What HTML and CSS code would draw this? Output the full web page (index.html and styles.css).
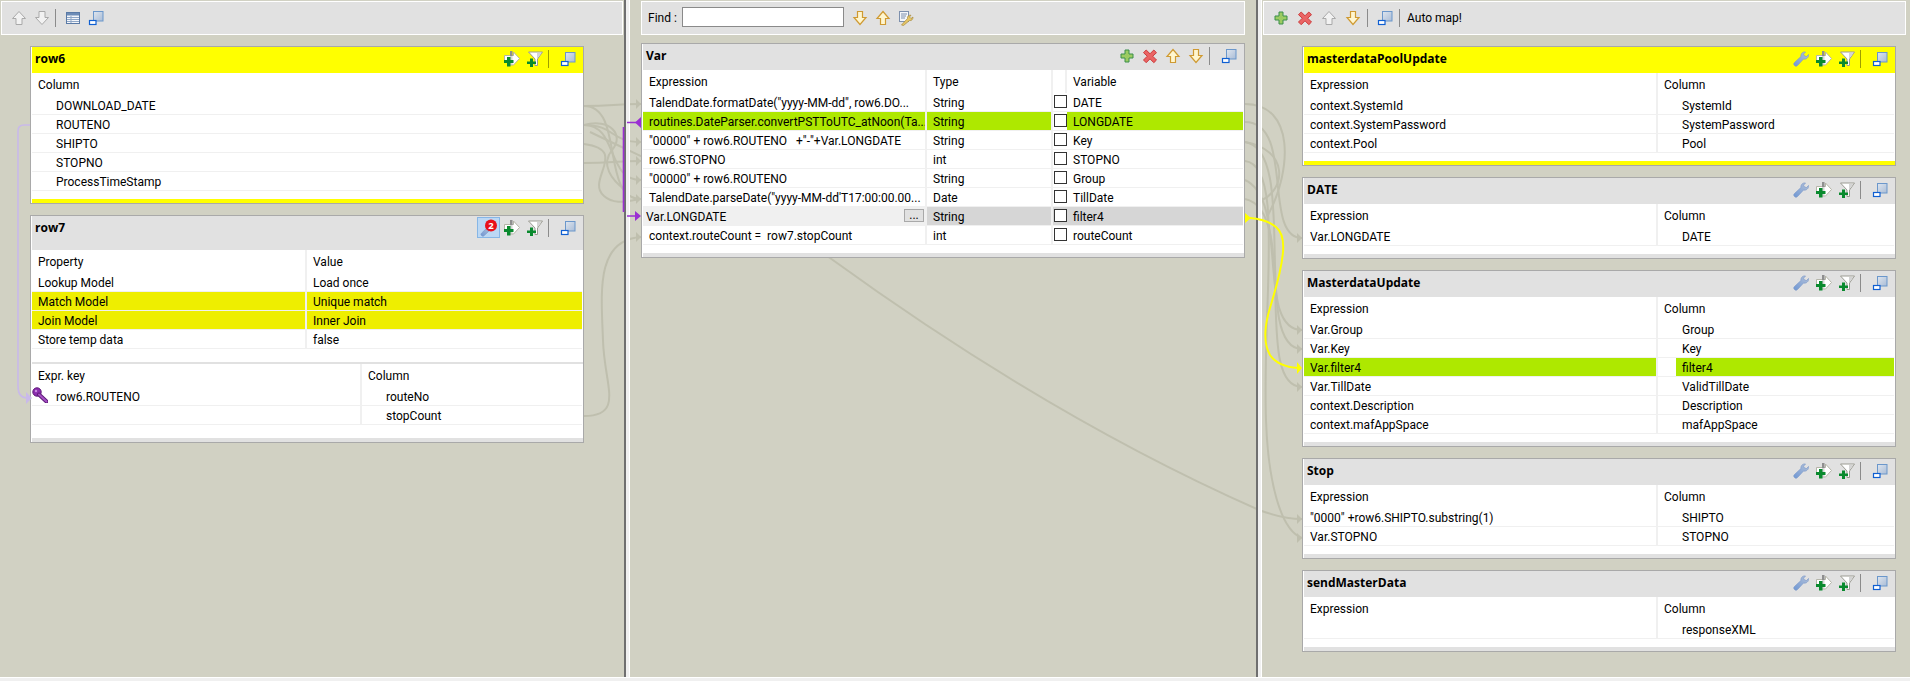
FILE: index.html
```html
<!DOCTYPE html>
<html lang="en">
<head>
<meta charset="utf-8">
<title>tMap editor</title>
<link rel="stylesheet" href="styles.css">
</head>
<body>
<svg class="sprite" width="0" height="0" aria-hidden="true">
  <defs>
    <linearGradient id="g-win" x1="0" y1="0" x2="1" y2="1"><stop offset="0" stop-color="#dfe6ef"/><stop offset="1" stop-color="#a9bcd6"/></linearGradient>
    <linearGradient id="g-wrench" x1="0" y1="1" x2="1" y2="0"><stop offset="0" stop-color="#6f97d4"/><stop offset="1" stop-color="#b4c2d8"/></linearGradient>
    <symbol id="i-up-off" viewBox="0 0 16 16"><path d="M8 1.500 14.500 8.500H11V14.500H5V8.500H1.500Z" fill="#f2f2f2" stroke="#a9a9a9"/></symbol>
    <symbol id="i-down-off" viewBox="0 0 16 16"><path d="M5 1.500H11V7.500H14.500L8 14.500 1.500 7.500H5Z" fill="#f2f2f2" stroke="#a9a9a9"/></symbol>
    <symbol id="i-up" viewBox="0 0 16 16"><path d="M8 1.500 14 8.500H10.500V14.500H5.500V8.500H2Z" fill="#fff6cf" stroke="#cf9a32" stroke-width="1.200"/></symbol>
    <symbol id="i-down" viewBox="0 0 16 16"><path d="M5.500 1.500H10.500V7.500H14L8 14.500 2 7.500H5.500Z" fill="#fff6cf" stroke="#cf9a32" stroke-width="1.200"/></symbol>
    <symbol id="i-plus" viewBox="0 0 16 16"><path d="M6 2H10V6H14V10H10V14H6V10H2V6H6Z" fill="#9ccb62" stroke="#3b8f4a"/></symbol>
    <symbol id="i-x" viewBox="0 0 16 16"><path d="M4.200 2 8 5.800 11.800 2 14.500 4.700 10.700 8.200 14.500 12 11.800 14.700 8 10.800 4.200 14.700 1.500 12 5.300 8.200 1.500 4.700Z" fill="#ea6464" stroke="#cc3c3c"/></symbol>
    <symbol id="i-table" viewBox="0 0 16 16"><rect x="1.500" y="2.500" width="13" height="11" fill="#f4f6fa" stroke="#5a7aa6"/><rect x="2" y="3" width="12" height="2.500" fill="#6d8cb6"/><path d="M2 7.500H14M2 9.500H14M2 11.500H14M6 6V13" stroke="#8ea6c6"/></symbol>
    <symbol id="i-win" viewBox="0 0 16 16"><rect x="5.500" y="1.500" width="9.500" height="9.500" fill="url(#g-win)" stroke="#6b97cb"/><rect x="1.500" y="10.500" width="6.500" height="4" fill="#fff" stroke="#0f5fd2" stroke-width="1.200"/></symbol>
    <symbol id="i-addarrow" viewBox="0 0 16 16"><path d="M.5 4.500H9.500V1L15.500 7.500 9.500 14H4.500V11H.5Z" fill="#fff" stroke="#b5b5a8"/><rect x="6" y="0" width="2.500" height="5" fill="#8f8f8f"/><rect x="6" y="5" width="2.500" height="9" fill="#bdbdbd" opacity=".6"/><path d="M3 6H6.500V9H9.500V12H6.500V15.500H3V12H0V9H3Z" fill="#0a8a2e"/></symbol>
    <symbol id="i-addfilter" viewBox="0 0 16 16"><path d="M1.500 1H15.500L10.500 8V14.500H8V8Z" fill="#fff" stroke="#9b9b92"/><path d="M10 8 13.500 3 14.500 2H10Z" fill="#d4d4d4"/><path d="M3 7.500H6V10.500H9V13H6V16H3V13H0V10.500H3Z" fill="#0a8a2e"/></symbol>
    <symbol id="i-wrench" viewBox="0 0 16 16"><path d="M1.500 14.500C.5 13.500.5 12.500 1.500 11.500L8 5.500C7.500 3 9.500.5 12.500 1L10.500 3.200 11.500 5 13.500 5.500 15.500 3.500C16 6.500 13 8.800 10.500 8L4.500 14.500C3.500 15.500 2.500 15.500 1.500 14.500Z" fill="url(#g-wrench)" stroke="#7d9aca" stroke-width=".7"/></symbol>
    <symbol id="i-badge" viewBox="0 0 18 18"><path d="M1.500 16.500C.7 15.700.8 15 1.500 14.200L8 8 10.500 10.500 4 16.700C3 17.500 2.300 17.300 1.500 16.500Z" fill="url(#g-wrench)" stroke="#7d9aca" stroke-width=".7"/><circle cx="11" cy="6.500" r="6" fill="#e8101a"/><text x="11" y="10" text-anchor="middle" class="badge-num">2</text></symbol>
    <symbol id="i-key" viewBox="0 0 16 16"><circle cx="5" cy="5" r="4.200" fill="#8c2db0" stroke="#5e1a7a"/><path d="M7 7.500 14.500 14.500" stroke="#5e1a7a" stroke-width="4" stroke-linecap="round"/><path d="M7 7.500 14.500 14.500" stroke="#a651c4" stroke-width="2" stroke-linecap="round"/><circle cx="4" cy="4" r="1.200" fill="#c98be0"/></symbol>
    <symbol id="i-wizard" viewBox="0 0 16 16"><rect x="1.500" y="1.500" width="9" height="10" fill="#f4f6fa" stroke="#7d90ad"/><path d="M3 4H9M3 6H8M3 8H7" stroke="#7d90ad"/><path d="M3.500 15 9.500 8.500C9 6.500 10.500 5 13 5.200L11.500 7 13 8.500 15 7C15 9.500 13.500 11 11.500 10.500L5.500 15.500Z" fill="#e6c667" stroke="#a8893a" stroke-width=".7"/></symbol>
  </defs>
</svg>

<div class="app">
  <svg class="links links-back" width="1910" height="681" viewBox="0 0 1910 681" aria-hidden="true">
    <g class="grey">
      <path d="M584 106C615 106 612 104 641 104"/>
      <path d="M584 125C615 125 610 142 641 142"/>
      <path d="M584 125C618 125 606 180 641 180"/>
      <path d="M584 163C612 163 615 161 641 161"/>
      <path d="M584 106C625 106 600 199 641 199"/>
      <path d="M584 144C630 150 585 180 604 196C615 206 630 200 641 199"/>
      <path d="M584 125C610 118 625 135 612 150C600 165 612 180 625 190"/>
      <path d="M584 416C625 416 604 385 603 340C601 290 596 240 641 237"/>
      <path d="M590 132C680 175 760 210 830 258C950 345 1100 440 1259 510C1275 516 1290 519 1302 519"/>
      <path d="M1245 122C1295 122 1262 238 1302 238"/>
      <path d="M1245 142C1300 150 1250 349 1302 349"/>
      <path d="M1245 180C1290 200 1255 330 1302 330"/>
      <path d="M1245 199C1300 210 1252 387 1302 387"/>
      <path d="M1245 161C1285 165 1262 300 1266 420C1268 480 1280 530 1302 538"/>
      <path d="M1245 142C1290 150 1285 190 1262 200"/>
      <path d="M1245 104C1295 104 1292 170 1268 215"/>
    </g>
    <g class="grey-head">
      <path d="M636 99 641 104 636 109Z"/><path d="M636 137 641 142 636 147Z"/><path d="M636 156 641 161 636 166Z"/>
      <path d="M636 175 641 180 636 185Z"/><path d="M636 194 641 199 636 204Z"/><path d="M636 232 641 237 636 242Z"/>
      <path d="M1297 233 1302 238 1297 243Z"/><path d="M1297 325 1302 330 1297 335Z"/><path d="M1297 344 1302 349 1297 354Z"/>
      <path d="M1297 382 1302 387 1297 392Z"/><path d="M1297 514 1302 519 1297 524Z"/><path d="M1297 533 1302 538 1297 543Z"/>
    </g>
  </svg>

  <section class="pane pane-left">
    <div class="toolbar">
      <span class="btn"><svg class="ic"><use href="#i-up-off"/></svg></span>
      <span class="btn"><svg class="ic"><use href="#i-down-off"/></svg></span>
      <span class="sep sep-bar"></span>
      <span class="btn"><svg class="ic"><use href="#i-table"/></svg></span>
      <span class="btn"><svg class="ic"><use href="#i-win"/></svg></span>
    </div>
    <div class="cards">
      <article class="card">
        <header class="head head-yellow"><h2>row6</h2><div class="tools">
          <span class="tb"><svg class="ic"><use href="#i-addarrow"/></svg></span>
          <span class="tb"><svg class="ic"><use href="#i-addfilter"/></svg></span>
          <span class="sep"></span>
          <span class="tb"><svg class="ic"><use href="#i-win"/></svg></span>
        </div></header>
        <div class="tbl cols-1">
          <div class="c hd">Column</div>
          <div class="c ind">DOWNLOAD_DATE</div>
          <div class="c ind">ROUTENO</div>
          <div class="c ind">SHIPTO</div>
          <div class="c ind">STOPNO</div>
          <div class="c ind">ProcessTimeStamp</div>
        </div>
        <div class="spacer"></div>
        <div class="band band-yellow"></div>
      </article>

      <article class="card">
        <header class="head head-tall"><h2>row7</h2><div class="tools">
          <span class="tb tb-on"><svg class="ic ic-lg"><use href="#i-badge"/></svg></span>
          <span class="tb"><svg class="ic"><use href="#i-addarrow"/></svg></span>
          <span class="tb"><svg class="ic"><use href="#i-addfilter"/></svg></span>
          <span class="sep"></span>
          <span class="tb"><svg class="ic"><use href="#i-win"/></svg></span>
        </div></header>
        <div class="tbl cols-prop">
          <div class="c hd sp">Property</div><div class="c hd">Value</div>
          <div class="c sp">Lookup Model</div><div class="c">Load once</div>
          <div class="c sp mark">Match Model</div><div class="c mark">Unique match</div>
          <div class="c sp mark">Join Model</div><div class="c mark">Inner Join</div>
          <div class="c sp">Store temp data</div><div class="c">false</div>
        </div>
        <div class="spacer spacer-lg"></div>
        <div class="band band-thin"></div>
        <div class="tbl cols-key">
          <div class="c hd sp">Expr. key</div><div class="c hd">Column</div>
          <div class="c sp ind keyed"><svg class="ic key"><use href="#i-key"/></svg>row6.ROUTENO</div><div class="c ind">routeNo</div>
          <div class="c sp ind"></div><div class="c ind">stopCount</div>
        </div>
        <div class="spacer spacer-lg"></div>
        <div class="band"></div>
      </article>
    </div>
  </section>
  <div class="sash"></div>

  <section class="pane pane-mid">
    <div class="toolbar toolbar-find">
      <label class="find-label" for="find">Find :</label>
      <input id="find" class="find-input" type="text">
      <span class="btn"><svg class="ic"><use href="#i-down"/></svg></span>
      <span class="btn"><svg class="ic"><use href="#i-up"/></svg></span>
      <span class="btn"><svg class="ic"><use href="#i-wizard"/></svg></span>
    </div>
    <div class="cards">
      <article class="card">
        <header class="head"><h2>Var</h2><div class="tools">
          <span class="tb"><svg class="ic"><use href="#i-plus"/></svg></span>
          <span class="tb"><svg class="ic"><use href="#i-x"/></svg></span>
          <span class="tb"><svg class="ic"><use href="#i-up"/></svg></span>
          <span class="tb"><svg class="ic"><use href="#i-down"/></svg></span>
          <span class="sep"></span>
          <span class="tb"><svg class="ic"><use href="#i-win"/></svg></span>
        </div></header>
        <div class="tbl cols-var">
          <div class="c hd sp">Expression</div><div class="c hd sp">Type</div><div class="c hd sp"></div><div class="c hd">Variable</div>

          <div class="c sp">TalendDate.formatDate("yyyy-MM-dd", row6.DO...</div><div class="c sp">String</div><div class="c chk"><span class="box"></span></div><div class="c">DATE</div>
          <div class="c sp hit">routines.DateParser.convertPSTToUTC_atNoon(Ta...</div><div class="c sp hit">String</div><div class="c chk"><span class="box"></span></div><div class="c hit">LONGDATE</div>
          <div class="c sp">"00000" + row6.ROUTENO &nbsp; +"-"+Var.LONGDATE</div><div class="c sp">String</div><div class="c chk"><span class="box"></span></div><div class="c">Key</div>
          <div class="c sp">row6.STOPNO</div><div class="c sp">int</div><div class="c chk"><span class="box"></span></div><div class="c">STOPNO</div>
          <div class="c sp">"00000" + row6.ROUTENO</div><div class="c sp">String</div><div class="c chk"><span class="box"></span></div><div class="c">Group</div>
          <div class="c sp">TalendDate.parseDate("yyyy-MM-dd'T17:00:00.00...</div><div class="c sp">Date</div><div class="c chk"><span class="box"></span></div><div class="c">TillDate</div>
          <div class="c sp editing"><span>Var.LONGDATE</span><span class="more">...</span></div><div class="c sp picked">String</div><div class="c chk picked"><span class="box"></span></div><div class="c picked">filter4</div>
          <div class="c sp">context.routeCount = &nbsp;row7.stopCount</div><div class="c sp">int</div><div class="c chk"><span class="box"></span></div><div class="c">routeCount</div>
        </div>
        <div class="spacer"></div>
        <div class="band"></div>
      </article>
    </div>
  </section>
  <div class="sash"></div>

  <section class="pane pane-right">
    <div class="toolbar toolbar-out">
      <span class="btn"><svg class="ic"><use href="#i-plus"/></svg></span>
      <span class="btn"><svg class="ic"><use href="#i-x"/></svg></span>
      <span class="btn"><svg class="ic"><use href="#i-up-off"/></svg></span>
      <span class="btn"><svg class="ic"><use href="#i-down"/></svg></span>
      <span class="sep sep-bar"></span>
      <span class="btn"><svg class="ic"><use href="#i-win"/></svg></span>
      <span class="sep sep-bar"></span>
      <span class="auto">Auto map!</span>
    </div>
    <div class="cards">
      <article class="card">
        <header class="head head-yellow"><h2>masterdataPoolUpdate</h2><div class="tools">
          <span class="tb"><svg class="ic"><use href="#i-wrench"/></svg></span>
          <span class="tb"><svg class="ic"><use href="#i-addarrow"/></svg></span>
          <span class="tb"><svg class="ic"><use href="#i-addfilter"/></svg></span>
          <span class="sep"></span>
          <span class="tb"><svg class="ic"><use href="#i-win"/></svg></span>
        </div></header>
        <div class="tbl cols-out">
          <div class="c hd sp">Expression</div><div class="c hd">Column</div>
          <div class="c sp">context.SystemId</div><div class="c ind">SystemId</div>
          <div class="c sp">context.SystemPassword</div><div class="c ind">SystemPassword</div>
          <div class="c sp">context.Pool</div><div class="c ind">Pool</div>
        </div>
        <div class="spacer"></div>
        <div class="band band-yellow"></div>
      </article>

      <article class="card">
        <header class="head"><h2>DATE</h2><div class="tools">
          <span class="tb"><svg class="ic"><use href="#i-wrench"/></svg></span>
          <span class="tb"><svg class="ic"><use href="#i-addarrow"/></svg></span>
          <span class="tb"><svg class="ic"><use href="#i-addfilter"/></svg></span>
          <span class="sep"></span>
          <span class="tb"><svg class="ic"><use href="#i-win"/></svg></span>
        </div></header>
        <div class="tbl cols-out">
          <div class="c hd sp">Expression</div><div class="c hd">Column</div>
          <div class="c sp">Var.LONGDATE</div><div class="c ind">DATE</div>
        </div>
        <div class="spacer"></div>
        <div class="band"></div>
      </article>

      <article class="card">
        <header class="head"><h2>MasterdataUpdate</h2><div class="tools">
          <span class="tb"><svg class="ic"><use href="#i-wrench"/></svg></span>
          <span class="tb"><svg class="ic"><use href="#i-addarrow"/></svg></span>
          <span class="tb"><svg class="ic"><use href="#i-addfilter"/></svg></span>
          <span class="sep"></span>
          <span class="tb"><svg class="ic"><use href="#i-win"/></svg></span>
        </div></header>
        <div class="tbl cols-out">
          <div class="c hd sp">Expression</div><div class="c hd">Column</div>
          <div class="c sp">Var.Group</div><div class="c ind">Group</div>
          <div class="c sp">Var.Key</div><div class="c ind">Key</div>
          <div class="c sp hit">Var.filter4</div><div class="c ind hit-ind"><span class="hit-fill">filter4</span></div>
          <div class="c sp">Var.TillDate</div><div class="c ind">ValidTillDate</div>
          <div class="c sp">context.Description</div><div class="c ind">Description</div>
          <div class="c sp">context.mafAppSpace</div><div class="c ind">mafAppSpace</div>
        </div>
        <div class="spacer"></div>
        <div class="band"></div>
      </article>

      <article class="card">
        <header class="head"><h2>Stop</h2><div class="tools">
          <span class="tb"><svg class="ic"><use href="#i-wrench"/></svg></span>
          <span class="tb"><svg class="ic"><use href="#i-addarrow"/></svg></span>
          <span class="tb"><svg class="ic"><use href="#i-addfilter"/></svg></span>
          <span class="sep"></span>
          <span class="tb"><svg class="ic"><use href="#i-win"/></svg></span>
        </div></header>
        <div class="tbl cols-out">
          <div class="c hd sp">Expression</div><div class="c hd">Column</div>
          <div class="c sp">"0000" +row6.SHIPTO.substring(1)</div><div class="c ind">SHIPTO</div>
          <div class="c sp">Var.STOPNO</div><div class="c ind">STOPNO</div>
        </div>
        <div class="spacer"></div>
        <div class="band"></div>
      </article>

      <article class="card">
        <header class="head"><h2>sendMasterData</h2><div class="tools">
          <span class="tb"><svg class="ic"><use href="#i-wrench"/></svg></span>
          <span class="tb"><svg class="ic"><use href="#i-addarrow"/></svg></span>
          <span class="tb"><svg class="ic"><use href="#i-addfilter"/></svg></span>
          <span class="sep"></span>
          <span class="tb"><svg class="ic"><use href="#i-win"/></svg></span>
        </div></header>
        <div class="tbl cols-out">
          <div class="c hd sp">Expression</div><div class="c hd">Column</div>
          <div class="c sp"></div><div class="c ind">responseXML</div>
        </div>
        <div class="spacer"></div>
        <div class="band"></div>
      </article>
    </div>
  </section>

  <svg class="links links-front" width="1910" height="681" viewBox="0 0 1910 681" aria-hidden="true">
    <path class="lilac" d="M30 125H24C20 125 18 127 18 131V386C18 394 21 398 27 398"/>
    <path class="lilac-head" d="M26 392 32 398 26 404Z"/>
    <path class="purple" d="M623.500 127V212M627 122.500H637M627 216H637"/>
    <path class="purple-head" d="M641 117 635 122.500 641 128ZM635 211 641 216 635 221Z"/>
    <path class="yellow" d="M1250 218C1262 219 1270 222 1276 227C1282 232 1284 240 1283 252C1281 276 1273 296 1268 315C1264 332 1264 345 1270 355C1276 364 1286 367 1298 368"/>
    <path class="yellow-head" d="M1245 213 1251 218 1245 223ZM1297 362 1302 368 1297 374Z"/>
  </svg>
</div>
</body>
</html>
```

FILE: styles.css
```css
* { box-sizing: border-box; }

html, body {
  margin: 0;
  padding: 0;
  width: 1910px;
  height: 681px;
  overflow: hidden;
  background: #f0f0f0;
}

body {
  font-family: Roboto, "Open Sans", sans-serif;
  font-size: 12px;
  color: #000;
}

.sprite { display: block; width: 0; height: 0; }

.app {
  position: relative;
  display: grid;
  grid-template-columns: 626px 4px 628px 4px 648px;
  width: 1910px;
  height: 678px;
  background: #d1d1c3;
  border-bottom: 1px solid #fff;
}

.links { position: absolute; left: 0; top: 0; pointer-events: none; }
.links-back { z-index: 0; }
.links-front { z-index: 2; }
.links path { fill: none; }
.grey path { stroke: #bfbfae; stroke-width: 2; fill: none; }
.links .grey-head path { fill: #bfbfae; stroke: none; }
.links .lilac { stroke: #c9b9ea; stroke-width: 1.6; }
.links .lilac-head { fill: #c9b9ea; }
.links .purple { stroke: #9a2fd2; stroke-width: 1.6; }
.links .purple-head { fill: #9a2fd2; }
.links .yellow { stroke: #ffff00; stroke-width: 2; }
.links .yellow-head { fill: #ffff00; }

.sash {
  position: relative;
  z-index: 1;
  background: #f0f0f0;
  border-right: 1px solid #fff;
}

.pane {
  position: relative;
  z-index: 1;
  display: flex;
  flex-direction: column;
  min-width: 0;
  padding-top: 1px;
}
.pane-left { border-right: 2px solid #6f6f6f; }
.pane-mid { border-right: 2px solid #6f6f6f; padding-inline: 11px; }
.pane-right { padding-left: 1px; padding-right: 4px; }

.toolbar {
  display: flex;
  align-items: center;
  flex: none;
  height: 34px;
  padding-left: 5px;
  background: #e1e1e1;
  border: 1px solid #fff;
}
.pane-left .toolbar { margin-left: 1px; width: 622px; }
.toolbar-find { padding-left: 6px; }
.toolbar-out .btn { width: 24px; }

.btn {
  display: flex;
  align-items: center;
  justify-content: center;
  flex: none;
  width: 23px;
  height: 23px;
}

.ic { display: block; width: 16px; height: 16px; flex: none; }
.ic-lg { width: 18px; height: 18px; }

.sep {
  flex: none;
  width: 1px;
  height: 18px;
  margin: 0 7px 0 2px;
  background: rgba(0, 0, 0, .38);
}
.sep-bar { margin: 0 5px 0 2px; }

.auto { margin-left: 2px; }
.find-label { width: 34px; }
.find-input {
  width: 162px;
  height: 20px;
  margin: -2px 4px 0 0;
  padding: 0 2px;
  border: 1px solid #8a8a8a;
  border-radius: 0;
  background: #fff;
  outline: 0;
  font: inherit;
}

.cards {
  display: flex;
  flex-direction: column;
  gap: 11px;
}
.pane-left .cards { padding: 11px 40px 0 30px; }
.pane-mid .cards { padding-top: 8px; }
.pane-right .cards { padding: 11px 10px 0 39px; }

.card {
  background: #fff;
  border: 1px solid #a9a9a9;
  padding: 0 1px;
}

.head {
  display: flex;
  justify-content: space-between;
  align-items: flex-start;
  height: 26px;
  margin-right: -1px;
  padding: 0 4px 0 3px;
  background: #e1e1e1;
}
.head-yellow { background: #ffff00; }
.head-tall { height: 34px; }
.head h2 {
  margin: 0;
  font-family: "Open Sans", sans-serif;
  font-size: 12px;
  line-height: 24px;
  font-weight: 700;
}

.tools {
  display: flex;
  align-items: center;
  padding-top: 1px;
}
.tb {
  display: flex;
  align-items: center;
  justify-content: center;
  flex: none;
  width: 23px;
  height: 21px;
}
.tb-on {
  background: #bcd8f4;
  border: 1px solid #86b6e6;
}
.badge-num {
  fill: #fff;
  font-family: "Open Sans", sans-serif;
  font-size: 9.500px;
  font-weight: 700;
}

.tbl { display: grid; }
.cols-1 { grid-template-columns: 1fr; }
.cols-prop { grid-template-columns: 275px 1fr; }
.cols-key { grid-template-columns: 330px 1fr; }
.cols-var { grid-template-columns: 284px 126px 14px 1fr; }
.cols-out { grid-template-columns: 354px 1fr; }

.c {
  height: 19px;
  padding-left: 6px;
  line-height: 21px;
  white-space: nowrap;
  overflow: hidden;
  border-bottom: 1px solid #f0f0f0;
  background-clip: padding-box;
}
.hd { height: 23px; line-height: 25px; border-bottom: 0; }
.ind { padding-left: 24px; }
.sp { border-right: 2px solid #f0f0f0; }

.mark { background-color: #eeee00; }
.hit { background-color: #aee800; }
.picked { background-color: #d6d6d6; }

.keyed { position: relative; overflow: visible; }
.key { position: absolute; left: 0; top: 0; }

.hit-ind { padding-left: 18px; }
.hit-fill {
  display: block;
  height: 18px;
  padding-left: 6px;
  background: #aee800;
}

.chk { padding: 2px 0 0 1px; }
.box {
  display: block;
  width: 13px;
  height: 13px;
  background: #fff;
  border: 1px solid #333;
}

.editing {
  display: flex;
  justify-content: space-between;
  align-items: flex-start;
  padding: 0 1px 0 3px;
  background-color: #f0f0f0;
}
.more {
  width: 20px;
  height: 13px;
  margin-top: 2px;
  line-height: 10px;
  text-align: center;
  background: #e1e1e1;
  border: 1px solid #a9a9a9;
}

.spacer { height: 8px; }
.spacer-lg { height: 13px; }
.band { height: 4px; margin-right: -1px; background: #e1e1e1; }
.band-thin { height: 2px; }
.band-yellow { background: #ffff00; }
```
